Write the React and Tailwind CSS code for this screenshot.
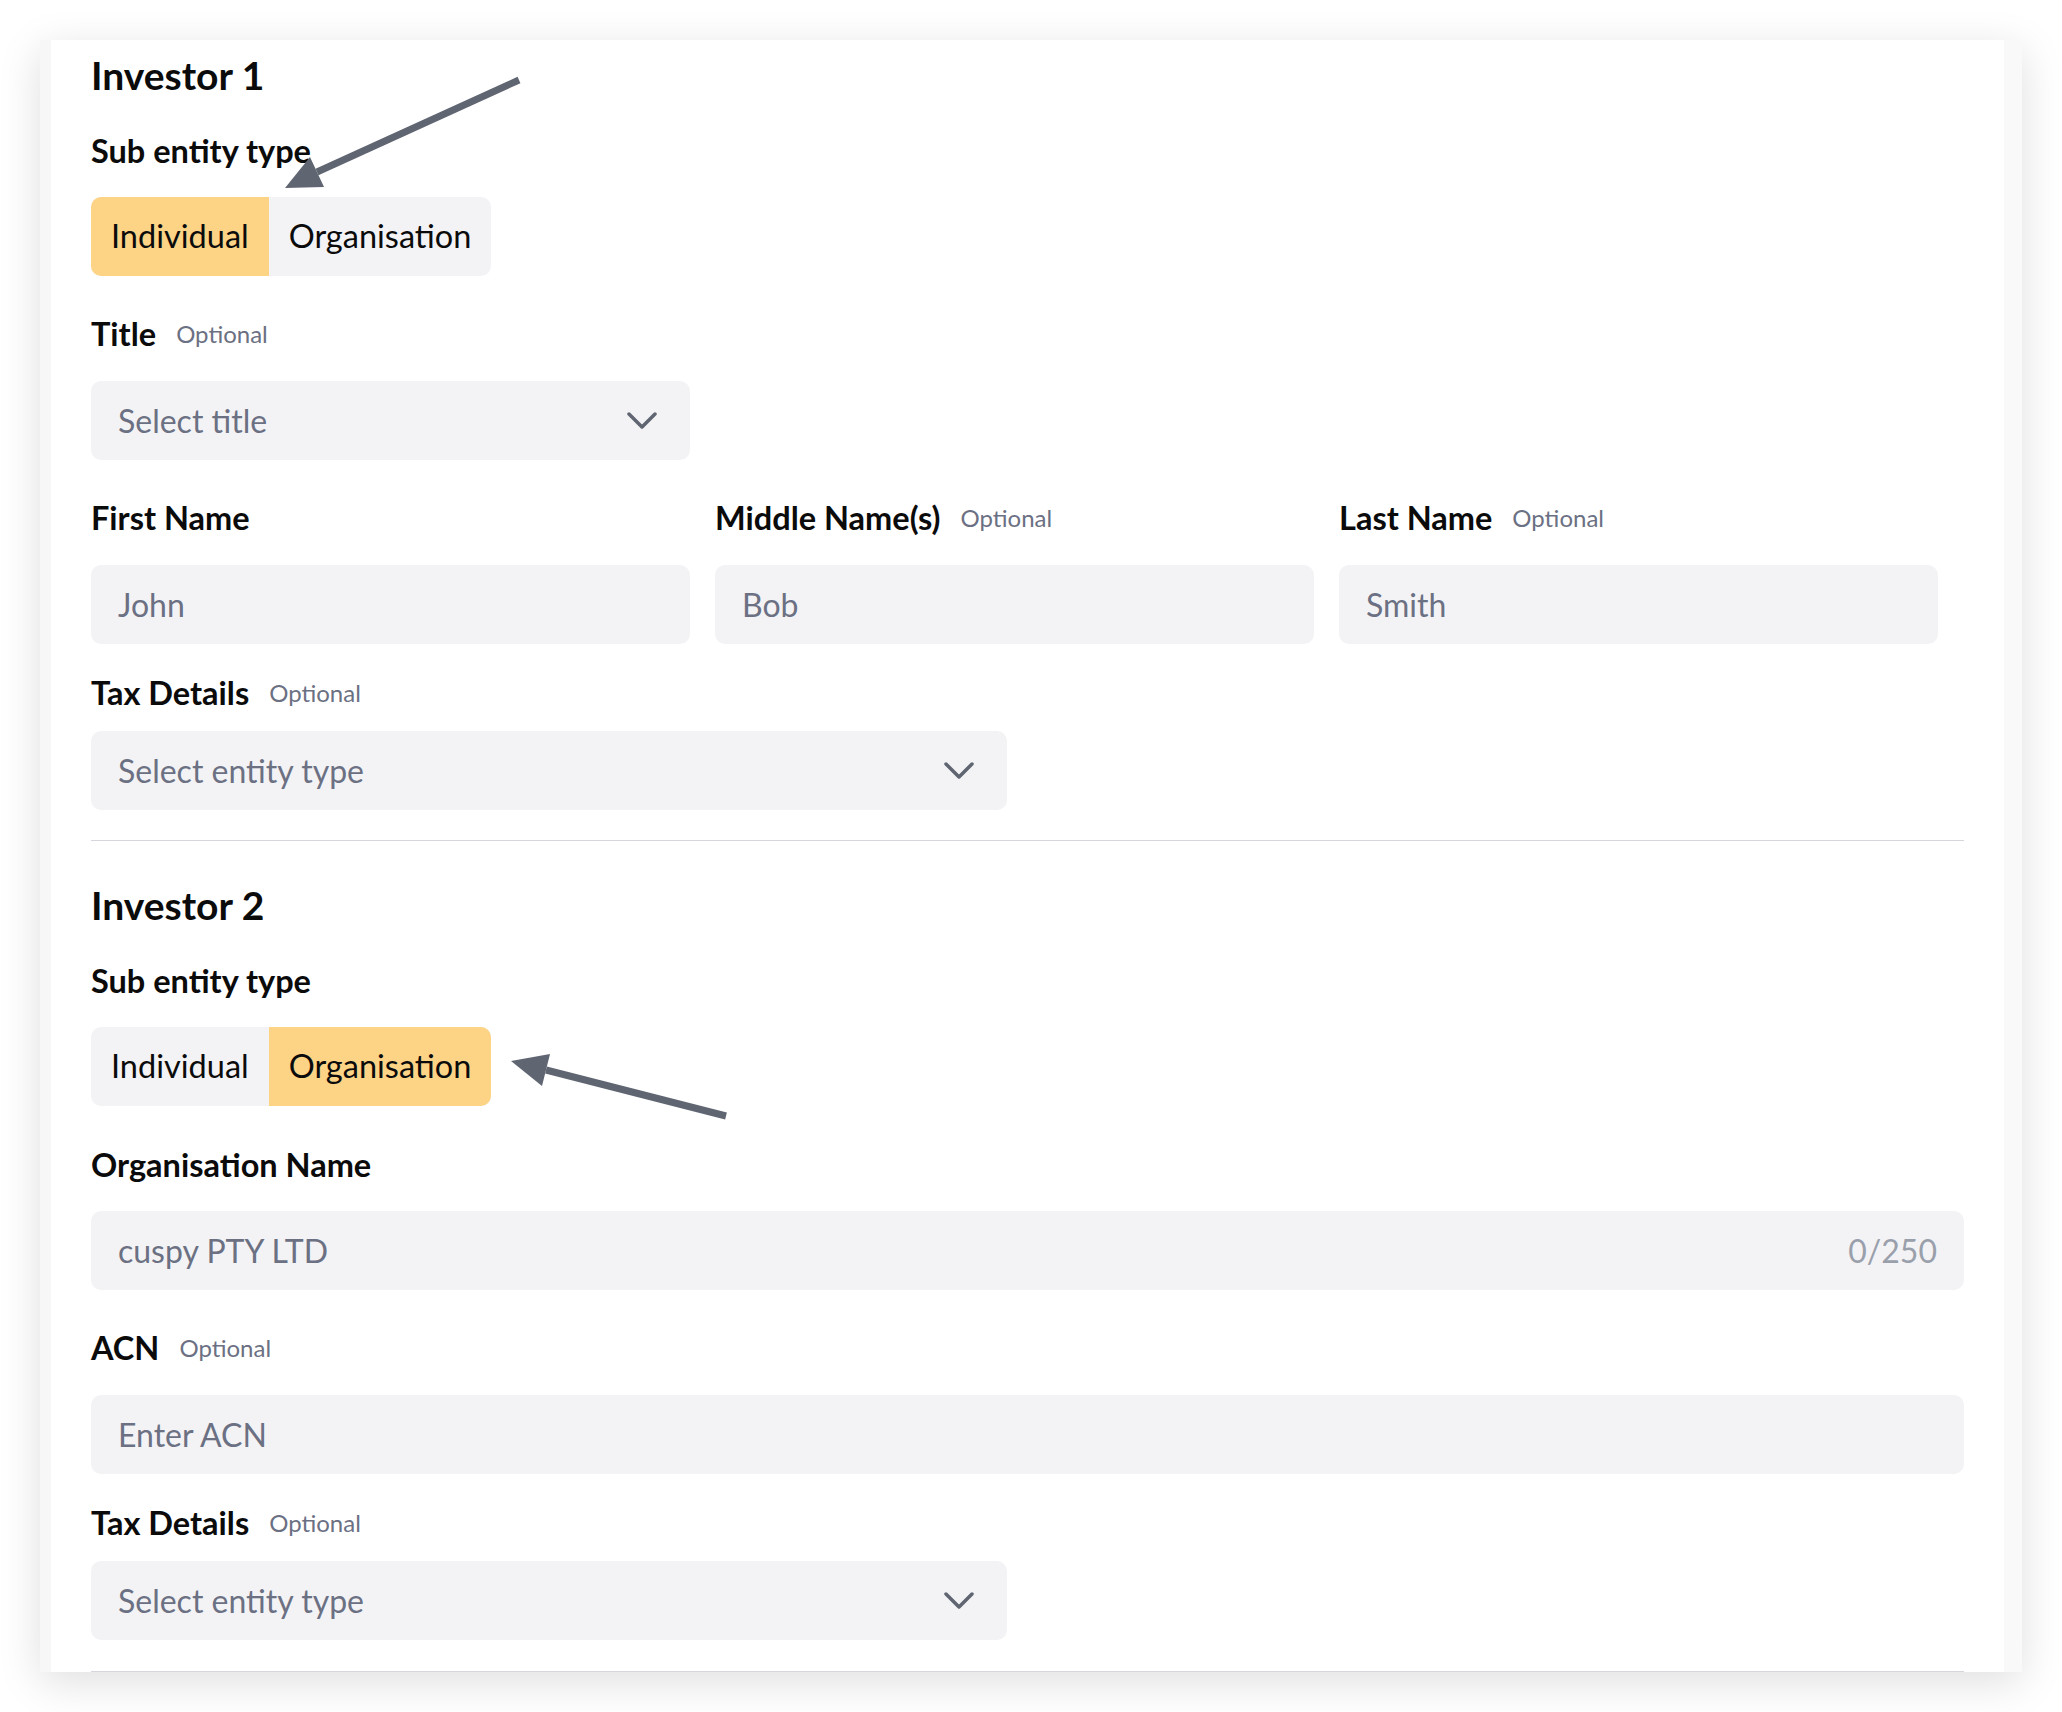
import React from "react";

const font = { fontFamily: "Lato, 'Noto Sans', sans-serif" };

const Label = ({ children, optional }) => (
  <div className="flex items-center h-[40px] leading-[40px]">
    <span className="text-[32.5px] font-bold text-[#0b0b0c]">{children}</span>
    {optional && <span className="ml-5 text-[24px] text-[#6b7083]">Optional</span>}
  </div>
);

const Chevron = () => (
  <svg width="30" height="17" viewBox="0 0 30 17" fill="none">
    <path d="M2 2l13 13L28 2" stroke="#5f6571" strokeWidth="3.5" strokeLinecap="round" strokeLinejoin="round" />
  </svg>
);

const Select = ({ placeholder, width }) => (
  <div className={`${width} h-[79px] rounded-[10px] bg-[#f3f3f5] flex items-center justify-between pl-[27px] pr-[33px]`}>
    <span className="text-[32px] text-[#6b7083]">{placeholder}</span>
    <Chevron />
  </div>
);

const TextInput = ({ placeholder, counter }) => (
  <div className="w-full h-[79px] rounded-[10px] bg-[#f3f3f5] flex items-center pl-[27px] pr-[27px]">
    <input
      className="flex-1 min-w-0 bg-transparent outline-none text-[32px] text-[#1f2937] placeholder:text-[#6b7083]"
      placeholder={placeholder}
    />
    {counter && <span className="text-[32px] text-[#9aa0ab]">{counter}</span>}
  </div>
);

const Toggle = ({ value }) => (
  <div className="inline-flex h-[79px] rounded-[10px] overflow-hidden bg-[#f3f3f5]">
    {["Individual", "Organisation"].map((opt) => (
      <div
        key={opt}
        className={`flex items-center px-[20px] text-[32.5px] text-[#0b0b0c] ${value === opt ? "bg-[#fdd386]" : ""}`}
      >
        {opt}
      </div>
    ))}
  </div>
);

const Heading = ({ children }) => (
  <h2 className="h-[48px] leading-[48px] text-[39px] font-bold text-[#0b0b0c]">{children}</h2>
);

const Arrow = ({ x1, y1, bx, by, head }) => (
  <g>
    <line x1={x1} y1={y1} x2={bx} y2={by} stroke="#5f6571" strokeWidth="7" />
    <polygon points={head} fill="#5f6571" />
  </g>
);

export default function App() {
  return (
    <div className="relative w-[2062px] h-[1712px] bg-white pt-[40px] pl-[40px]" style={font}>
      <div className="flex w-[1982px] h-[1632px] overflow-hidden bg-white shadow-[0_10px_40px_rgba(0,0,0,0.13)]">
        <div className="w-[11px] bg-[#f7f7f7]" />
        <div className="flex-1 bg-white px-[40px] pt-[11px]">
          {/* Investor 1 */}
          <Heading>Investor 1</Heading>
          <div className="mt-[32px]">
            <Label>Sub entity type</Label>
          </div>
          <div className="mt-[26px]">
            <Toggle value="Individual" />
          </div>
          <div className="mt-[38px]">
            <Label optional>Title</Label>
          </div>
          <div className="mt-[27px]">
            <Select placeholder="Select title" width="w-[599px]" />
          </div>
          <div className="mt-[38px] flex gap-[25px]">
            {[
              ["First Name", false, "John"],
              ["Middle Name(s)", true, "Bob"],
              ["Last Name", true, "Smith"],
            ].map(([label, opt, ph]) => (
              <div key={label} className="w-[599px]">
                <Label optional={opt}>{label}</Label>
                <div className="mt-[27px]">
                  <TextInput placeholder={ph} />
                </div>
              </div>
            ))}
          </div>
          <div className="mt-[29px]">
            <Label optional>Tax Details</Label>
          </div>
          <div className="mt-[18px]">
            <Select placeholder="Select entity type" width="w-[916px]" />
          </div>
          <div className="mt-[30px] border-t border-[#d6d6dc]" />

          {/* Investor 2 */}
          <div className="mt-[40px]">
            <Heading>Investor 2</Heading>
          </div>
          <div className="mt-[32px]">
            <Label>Sub entity type</Label>
          </div>
          <div className="mt-[26px]">
            <Toggle value="Organisation" />
          </div>
          <div className="mt-[39px]">
            <Label>Organisation Name</Label>
          </div>
          <div className="mt-[26px]">
            <TextInput placeholder="cuspy PTY LTD" counter="0/250" />
          </div>
          <div className="mt-[38px]">
            <Label optional>ACN</Label>
          </div>
          <div className="mt-[27px]">
            <TextInput placeholder="Enter ACN" />
          </div>
          <div className="mt-[29px]">
            <Label optional>Tax Details</Label>
          </div>
          <div className="mt-[18px]">
            <Select placeholder="Select entity type" width="w-[916px]" />
          </div>
          <div className="mt-[31px] border-t border-[#d6d6dc]" />
        </div>
        <div className="w-[18px] bg-[#f9f9f9]" />
      </div>

      {/* annotation arrows */}
      <svg className="absolute left-0 top-0 pointer-events-none" width="2062" height="1712">
        <Arrow x1={519} y1={80} bx={317} by={172} head="285,188 310,157 324,187" />
        <Arrow x1={726} y1={1116} bx={546} by={1070} head="511,1061 550,1054 542,1086" />
      </svg>
    </div>
  );
}
